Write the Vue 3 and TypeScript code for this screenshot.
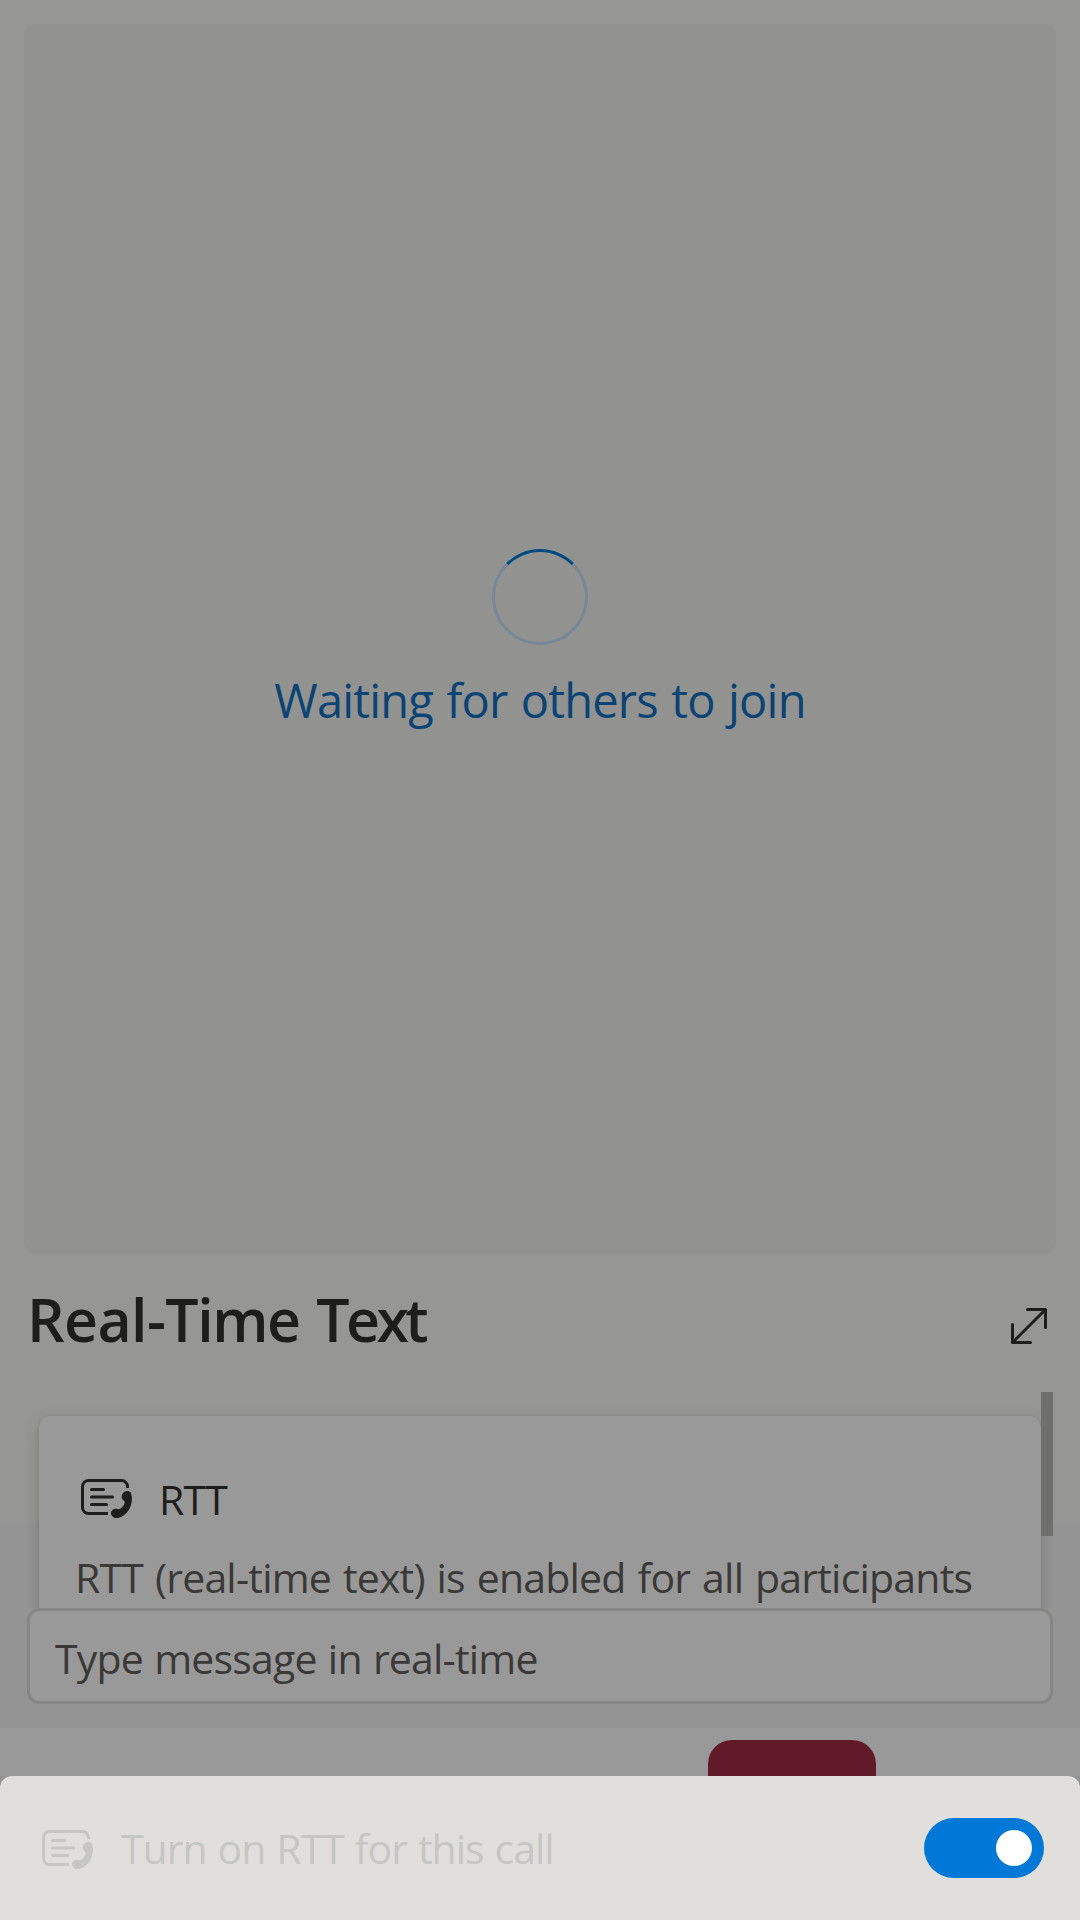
<script setup lang="ts">
import { ref } from 'vue'

const rttEnabled = ref<boolean>(true)
const statusText = 'Waiting for others to join'
const handset =
  'M16.11 8.56C16.67 7.89 18.11 7.7 18.6 8.6C19.35 10.4 19 13.4 17.22 15.22C16.1 16.4 14.6 17.1 13.67 17C12.7 16.9 11.95 16.1 12 15.22C12.1 14.4 12.9 13.8 13.67 13.9L14.6 14.05C15.6 13.9 16.5 12.7 16.6 11.6L15.85 10.85C15.4 10.2 15.5 9.2 16.11 8.56Z'
</script>

<template>
  <div class="screen">
    <main class="stage">
      <div class="spinner"></div>
      <div class="status">{{ statusText }}</div>
    </main>

    <header class="panel-header">
      <h2 class="title"><span class="lead">Real-</span>Time <span class="tail">Text</span></h2>
      <svg class="icon" viewBox="0 0 20 20" fill="none" stroke="currentColor" stroke-linecap="round" stroke-linejoin="round">
        <path d="M9.5 4.5H15.5V10.5M4.5 9.5V15.5H10.5M4.5 15.5L15.5 4.5" />
      </svg>
    </header>

    <section class="panel">
      <div class="feed">
        <article class="card">
          <div class="card-head">
            <svg class="icon" viewBox="0 0 20 20" fill="none" stroke="currentColor">
              <path d="M17.5 7V6.5A2 2 0 0 0 15.5 4.5H4.5A2 2 0 0 0 2.5 6.5V13.5A2 2 0 0 0 4.5 15.5H11" />
              <path stroke-linecap="round" d="M5.5 7.5H9.5M5.5 10H12.5M5.5 12.5H10.5" />
              <path fill="currentColor" stroke="none" :d="handset" />
            </svg>
            <span class="card-title">RTT</span>
          </div>
          <p class="card-text">RTT (real-time text) is enabled for all participants</p>
        </article>
        <div class="thumb"></div>
      </div>
      <div class="field"><span class="placeholder">Type message in real-time</span></div>
    </section>

    <footer class="controls"><div class="hangup"></div></footer>

    <section class="drawer">
      <svg class="icon" viewBox="0 0 20 20" fill="none" stroke="currentColor">
        <path d="M17.5 7V6.5A2 2 0 0 0 15.5 4.5H4.5A2 2 0 0 0 2.5 6.5V13.5A2 2 0 0 0 4.5 15.5H11" />
        <path stroke-linecap="round" d="M5.5 7.5H9.5M5.5 10H12.5M5.5 12.5H10.5" />
        <path fill="currentColor" stroke="none" :d="handset" />
      </svg>
      <span class="drawer-label">Turn on RTT for this call</span>
      <div class="toggle" :class="{ on: rttEnabled }" role="switch" :aria-checked="rttEnabled"><i class="knob"></i></div>
    </section>
  </div>
</template>

<style>
body {
  margin: 0;
  background: #949494;
}
</style>

<style scoped>
.screen {
  box-sizing: border-box;
  display: flex;
  flex-direction: column;
  width: 1080px;
  height: 1920px;
  padding-top: 24px;
  overflow: hidden;
  background: linear-gradient(#969694 1524px, #949494 1524px);
  font-family: 'Open Sans', 'Noto Sans', sans-serif;
  color: #1d1d1c;
  white-space: nowrap;
}
.icon {
  flex: none;
  width: 60px;
  height: 60px;
}
.stage {
  box-sizing: border-box;
  flex: none;
  display: flex;
  flex-direction: column;
  align-items: center;
  height: 1230px;
  margin: 0 24px;
  padding-top: 525px;
  border-radius: 12px;
  background: #929290;
}
.spinner {
  box-sizing: border-box;
  width: 96px;
  height: 96px;
  border: 3px solid #788796;
  border-top-color: #004880;
  border-radius: 50%;
}
.status {
  margin-top: 25px;
  font-size: 47px;
  line-height: 60px;
  letter-spacing: -0.8px;
  word-spacing: 2px;
  color: #0b4474;
}
.panel-header {
  flex: none;
  display: flex;
  justify-content: space-between;
  height: 138px;
  padding: 0 21px 0 27px;
}
.title {
  margin: 25px 0 0;
  font-size: 59px;
  font-weight: 600;
  line-height: 80px;
  letter-spacing: -1.5px;
  word-spacing: 3px;
}
.lead {
  letter-spacing: -0.6px;
}
.tail {
  letter-spacing: -3.6px;
}
.panel-header .icon {
  margin-top: 42px;
}
.panel {
  flex: none;
  box-sizing: border-box;
  height: 336px;
  padding: 0 27px;
}
.feed {
  box-sizing: border-box;
  display: flex;
  height: 216px;
  padding: 24px 0 0 12px;
  overflow: hidden;
}
.card {
  box-sizing: border-box;
  width: 1002px;
  height: 320px;
  padding: 36px;
  border-radius: 12px;
  background: #999;
  box-shadow: 0 9.6px 21.6px rgba(0, 0, 0, 0.132), 0 1.8px 5.4px rgba(0, 0, 0, 0.108);
}
.card-head {
  display: flex;
  align-items: center;
  height: 90px;
}
.card-title {
  margin: 3px 0 0 24px;
  font-size: 41px;
  line-height: 60px;
  letter-spacing: -0.8px;
}
.card-text {
  margin: 5px 0 0;
  font-size: 41px;
  line-height: 60px;
  letter-spacing: -0.8px;
  word-spacing: 2px;
  color: #3a3937;
}
.thumb {
  flex: none;
  position: relative;
  width: 12px;
  height: 144px;
  margin-top: -24px;
  background: #6f6f6e;
}
.field {
  box-sizing: border-box;
  height: 96px;
  padding: 17px 25px;
  border: 3px solid #868684;
  border-radius: 12px;
  background: #999;
}
.placeholder {
  display: block;
  font-size: 41px;
  line-height: 60px;
  letter-spacing: -0.8px;
  word-spacing: 1.3px;
  color: #3a3937;
}
.controls {
  flex: none;
  box-sizing: border-box;
  height: 48px;
  padding: 12px 0 0 708px;
  overflow: hidden;
  background: #999;
}
.hangup {
  width: 168px;
  height: 108px;
  border-radius: 24px;
  background: #611b28;
}
.drawer {
  flex: none;
  box-sizing: border-box;
  display: flex;
  align-items: center;
  height: 144px;
  padding: 0 36px;
  border-radius: 12px 12px 0 0;
  background: #e0dfdd;
  color: #c6c6c4;
}
.drawer-label {
  margin-left: 25px;
  font-size: 41px;
  line-height: 60px;
  letter-spacing: -1px;
  word-spacing: 1.3px;
}
.toggle {
  box-sizing: border-box;
  display: flex;
  width: 120px;
  height: 60px;
  margin-left: auto;
  padding: 12px;
  border-radius: 30px;
  background: #8a8886;
}
.toggle.on {
  justify-content: flex-end;
  background: #0078d7;
}
.knob {
  width: 36px;
  height: 36px;
  border-radius: 50%;
  background: #fff;
}
</style>
